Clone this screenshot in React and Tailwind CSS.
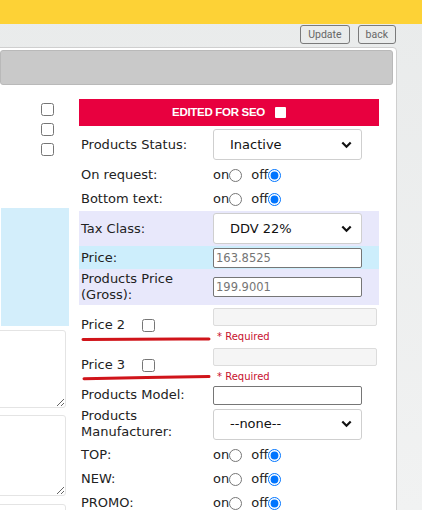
import React from "react";

const font = { fontFamily: '"DejaVu Sans", Verdana, sans-serif' };

const Chevron = () => (
  <svg className="absolute right-[10px] top-1/2 -translate-y-1/2 pointer-events-none" width="11" height="8" viewBox="0 0 11 8">
    <path d="M1.3 1.5 L5.5 5.7 L9.7 1.5" fill="none" stroke="#111" strokeWidth="2.2" />
  </svg>
);

const Select = ({ value }) => (
  <div className="relative w-[149px] h-[31px]">
    <select
      defaultValue={value}
      className="appearance-none w-full h-full bg-white border border-[#cfcfcf] rounded-[3px] pl-[16px] text-[13px] text-[#111] outline-none"
      style={font}
    >
      <option>{value}</option>
    </select>
    <Chevron />
  </div>
);

const OnOff = ({ name }) => (
  <div className="flex items-center text-[13px] text-[#222]">
    <span>on</span>
    <input type="radio" name={name} className="w-[13px] h-[13px] m-0 mr-[9px] accent-[#0075ff]" />
    <span>off</span>
    <input type="radio" name={name} defaultChecked className="w-[13px] h-[13px] m-0 accent-[#0075ff]" />
  </div>
);

const Row = ({ label, className, children }) => (
  <div className={`flex items-center ${className}`}>
    <div className="w-[134px] pl-[2px] leading-[16px]">{label}</div>
    <div className="flex-1">{children}</div>
  </div>
);

const Underline = ({ d }) => (
  <svg className="absolute left-[2px] top-0 pointer-events-none" width="134" height="44" viewBox="0 0 134 44">
    <path d={d} fill="none" stroke="#d0141a" strokeWidth="3" strokeLinecap="round" />
  </svg>
);

const PriceExtra = ({ label, line }) => (
  <div className="relative flex items-center h-[40px]">
    <div className="w-[134px] pl-[2px] flex items-center">
      <span>{label}</span>
      <input type="checkbox" className="ml-[17px] w-[13px] h-[13px] m-0" />
    </div>
    <div className="flex-1 flex flex-col">
      <input
        disabled
        className="w-[164px] h-[18px] bg-[#f5f5f5] border border-[#dcdcdc] rounded-[2px]"
      />
      <div className="text-[10px] text-[#c8102e] pl-[4px] mt-[5px] leading-[12px]">* Required</div>
    </div>
    <Underline d={line} />
  </div>
);

export default function App() {
  return (
    <div className="w-[422px] h-[510px] overflow-hidden bg-gradient-to-b from-[#e9ebeb] to-[#f1f2f2] text-[13px] text-[#222]" style={font}>
      <div className="h-[24px] bg-[#fdd236]" />
      <div className="flex justify-end gap-[8px] pr-[26px] pt-[1px]">
        <button className="h-[19px] px-[7px] border border-[#7a7a7a] rounded-[3px] text-[10.5px] text-[#666] bg-transparent" style={{ fontFamily: "Roboto, sans-serif" }}>
          Update
        </button>
        <button className="h-[19px] px-[7px] border border-[#7a7a7a] rounded-[3px] text-[10.5px] text-[#666] bg-transparent" style={{ fontFamily: "Roboto, sans-serif" }}>
          back
        </button>
      </div>
      <div className="mt-[3px] ml-[-3px] w-[400px] h-[480px] bg-white border border-[#cfcfcf] rounded-tr-[4px] p-[2px]">
        <div className="h-[35px] mr-[1px] bg-[#c9c9c9] border border-[#b9b9b9] rounded-[3px]" />
        <div className="flex mt-[14px] ml-[1px]">
          <div className="w-[68px] flex flex-col">
            <div className="flex flex-col gap-[7px] pl-[40px] pt-[4px]">
              <input type="checkbox" className="w-[13px] h-[13px] m-0" />
              <input type="checkbox" className="w-[13px] h-[13px] m-0" />
              <input type="checkbox" className="w-[13px] h-[13px] m-0" />
            </div>
            <div className="mt-[52px] h-[118px] bg-[#d3eefb]" />
            <textarea className="mt-[4px] ml-[-4px] w-[69px] h-[78px] border border-[#e4e4e4] rounded-[3px] bg-white" />
            <textarea className="mt-[7px] ml-[-4px] w-[69px] h-[81px] border border-[#e4e4e4] rounded-[3px] bg-white" />
            <textarea className="mt-[8px] ml-[-4px] w-[69px] h-[60px] border border-[#e4e4e4] rounded-[3px] bg-white" />
          </div>
          <div className="ml-[10px] w-[300px] flex flex-col">
            <div className="h-[27px] bg-[#e8003f] flex items-center justify-center gap-[10px]">
              <span className="text-white font-bold text-[11.5px] tracking-[-0.3px]" style={{ fontFamily: '"Liberation Sans", Arial, sans-serif' }}>
                EDITED FOR SEO
              </span>
              <span className="w-[11px] h-[11px] bg-white rounded-[1px]" />
            </div>
            <Row label="Products Status:" className="h-[37px]">
              <Select value="Inactive" />
            </Row>
            <Row label="On request:" className="h-[24px]">
              <OnOff name="req" />
            </Row>
            <Row label="Bottom text:" className="h-[24px]">
              <OnOff name="bottom" />
            </Row>
            <Row label="Tax Class:" className="h-[35px] bg-[#e8e8fb]">
              <Select value="DDV 22%" />
            </Row>
            <Row label="Price:" className="h-[23px] bg-[#cdeefc]">
              <input
                defaultValue="163.8525"
                className="w-[149px] h-[20px] bg-white border border-[#767676] rounded-[2px] px-[2px] text-[11.5px] text-[#757575]"
                style={font}
              />
            </Row>
            <Row
              label={
                <>
                  Products Price
                  <br />
                  (Gross):
                </>
              }
              className="h-[36px] bg-[#e8e8fb]"
            >
              <input
                defaultValue="199.9001"
                className="w-[149px] h-[20px] bg-white border border-[#767676] rounded-[2px] px-[2px] text-[11.5px] text-[#757575]"
                style={font}
              />
            </Row>
            <PriceExtra label="Price 2" line="M2 34.5 Q66 33.8 128 34" />
            <PriceExtra label="Price 3" line="M3 33.8 Q66 32.4 128 31.6" />
            <Row label="Products Model:" className="h-[20px]">
              <input className="w-[149px] h-[19px] bg-white border border-[#767676] rounded-[2px]" />
            </Row>
            <Row
              label={
                <>
                  Products
                  <br />
                  Manufacturer:
                </>
              }
              className="h-[38px]"
            >
              <Select value="--none--" />
            </Row>
            <Row label="TOP:" className="h-[24px]">
              <OnOff name="top" />
            </Row>
            <Row label="NEW:" className="h-[24px]">
              <OnOff name="new" />
            </Row>
            <Row label="PROMO:" className="h-[24px]">
              <OnOff name="promo" />
            </Row>
          </div>
        </div>
      </div>
    </div>
  );
}
